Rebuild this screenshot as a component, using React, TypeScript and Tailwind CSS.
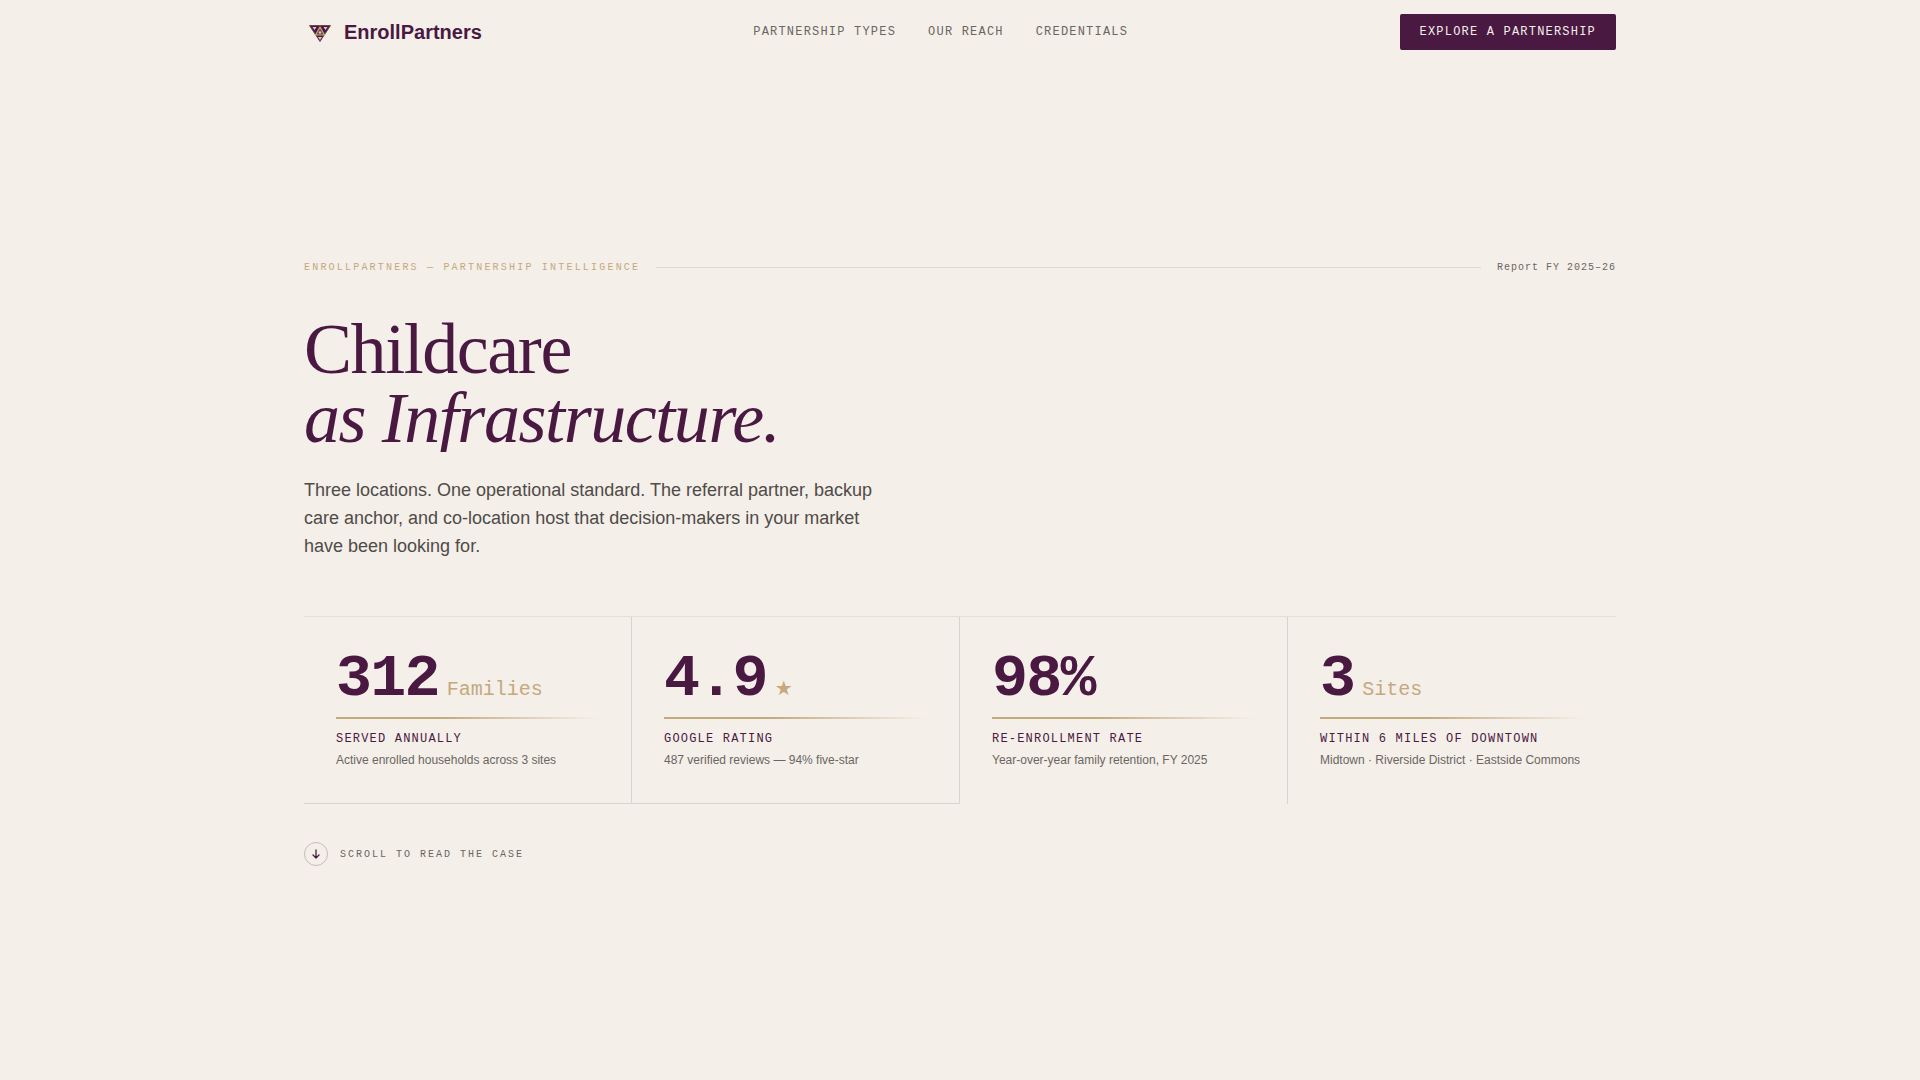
const navLinks = [
  { label: "Partnership Types", href: "#types" },
  { label: "Our Reach", href: "#reach" },
  { label: "Credentials", href: "#credentials" },
];

const stats = [
  { value: "312", unit: "Families", label: "Served Annually", note: "Active enrolled households across 3 sites", border: "border-r border-b" },
  { value: "4.9", unit: "★", label: "Google Rating", note: "487 verified reviews — 94% five-star", border: "border-r border-b" },
  { value: "98%", unit: "", label: "Re-enrollment Rate", note: "Year-over-year family retention, FY 2025", border: "border-r" },
  { value: "3", unit: "Sites", label: "Within 6 Miles of Downtown", note: "Midtown · Riverside District · Eastside Commons", border: "" },
];

function Logo() {
  return (
    <svg width="32" height="32" viewBox="0 0 32 32" fill="none" aria-hidden="true">
      <path d="M5.5 9.5H26.5L16 25.5Z" fill="#4a1942" stroke="#6b4a45" strokeWidth="1" strokeLinejoin="round" />
      <path d="M16 11L20.5 19H11.5Z" fill="#6b4a45" stroke="#c4a97d" strokeWidth="1.2" strokeLinejoin="round" />
      <path d="M8.5 11h4l-2 3ZM19.5 11h4l-2 3ZM14 21h4l-2 3Z" fill="#d9c6d3" />
      <circle cx="16" cy="16.5" r="1.2" fill="#d9c6d3" />
    </svg>
  );
}

export default function App() {
  return (
    <div className="min-h-screen bg-[#f4efe9] font-['Liberation_Sans',sans-serif] text-[#4a1942]">
      <header className="h-16">
        <div className="mx-auto flex h-full max-w-[1376px] items-center justify-between px-8">
          <a href="#" className="flex items-center gap-2 text-xl font-bold">
            <Logo />
            EnrollPartners
          </a>
          <nav className="flex gap-8 font-['Liberation_Mono',monospace] text-xs tracking-widest uppercase text-[#6b6661]">
            {navLinks.map((link) => (
              <a key={link.href} href={link.href}>
                {link.label}
              </a>
            ))}
          </nav>
          <button className="h-9 rounded-xs bg-[#4a1942] px-5 font-['Liberation_Mono',monospace] text-xs tracking-widest uppercase text-[#f4efe9]">
            Explore a Partnership
          </button>
        </div>
      </header>

      <main className="mx-auto flex min-h-[calc(100vh-64px)] max-w-[1376px] flex-col justify-center px-8 pb-[18px]">
        <div className="mb-[39px] flex items-center gap-4 font-['Liberation_Mono',monospace] text-[10px] leading-[15px]">
          <span className="tracking-[0.22em] uppercase text-[#c4a97d]">EnrollPartners — Partnership Intelligence</span>
          <span className="h-px flex-1 bg-[#ddd7d1]" />
          <span className="tracking-widest text-[#6b6661]">Report FY 2025–26</span>
        </div>

        <h1 className="mb-6 font-['Liberation_Serif',serif] text-[72px] leading-[71px] tracking-[-0.02em]">
          <span className="block h-[69px]">Childcare</span>
          <em className="block h-[69px] overflow-hidden">as Infrastructure.</em>
        </h1>

        <p className="mb-14 max-w-[580px] text-lg leading-7 text-[#4f4b48]">
          Three locations. One operational standard. The referral partner, backup care anchor, and co-location host that
          decision-makers in your market have been looking for.
        </p>

        <section className="grid grid-cols-4 border-t border-[#e4dfd9]">
          {stats.map((stat) => (
            <div key={stat.label} className={`border-[#d9d4cf] px-8 pt-8 pb-[34px] ${stat.border}`}>
              <p className="font-['Liberation_Mono','DejaVu_Sans',monospace] text-[60px] leading-[60px] font-bold">
                <span className="tracking-[-0.03em]">{stat.value}</span>
                {stat.unit && <span className="ml-2 text-xl leading-none font-normal text-[#c4a97d]">{stat.unit}</span>}
              </p>
              <div className="mt-2 mb-3 h-0.5 bg-linear-to-r from-[#c4a97d] from-40% to-transparent" />
              <p className="font-['Liberation_Mono',monospace] text-xs tracking-widest uppercase">{stat.label}</p>
              <p className="mt-1 text-xs leading-[18px] text-[#6b6661]">{stat.note}</p>
            </div>
          ))}
        </section>

        <a href="#case" className="mt-[38px] flex items-center gap-3 self-start font-['Liberation_Mono',monospace] text-[10px] tracking-[0.2em] uppercase text-[#6b6661]">
          <span className="flex size-6 items-center justify-center rounded-full border border-[#c5bcbb]">
            <svg width="10" height="10" viewBox="0 0 10 10" fill="none" stroke="#4a1942" strokeWidth="1.3" strokeLinecap="round" strokeLinejoin="round" aria-hidden="true">
              <path d="M5 1v8M2 6l3 3 3-3" />
            </svg>
          </span>
          Scroll to read the case
        </a>
      </main>
    </div>
  );
}
